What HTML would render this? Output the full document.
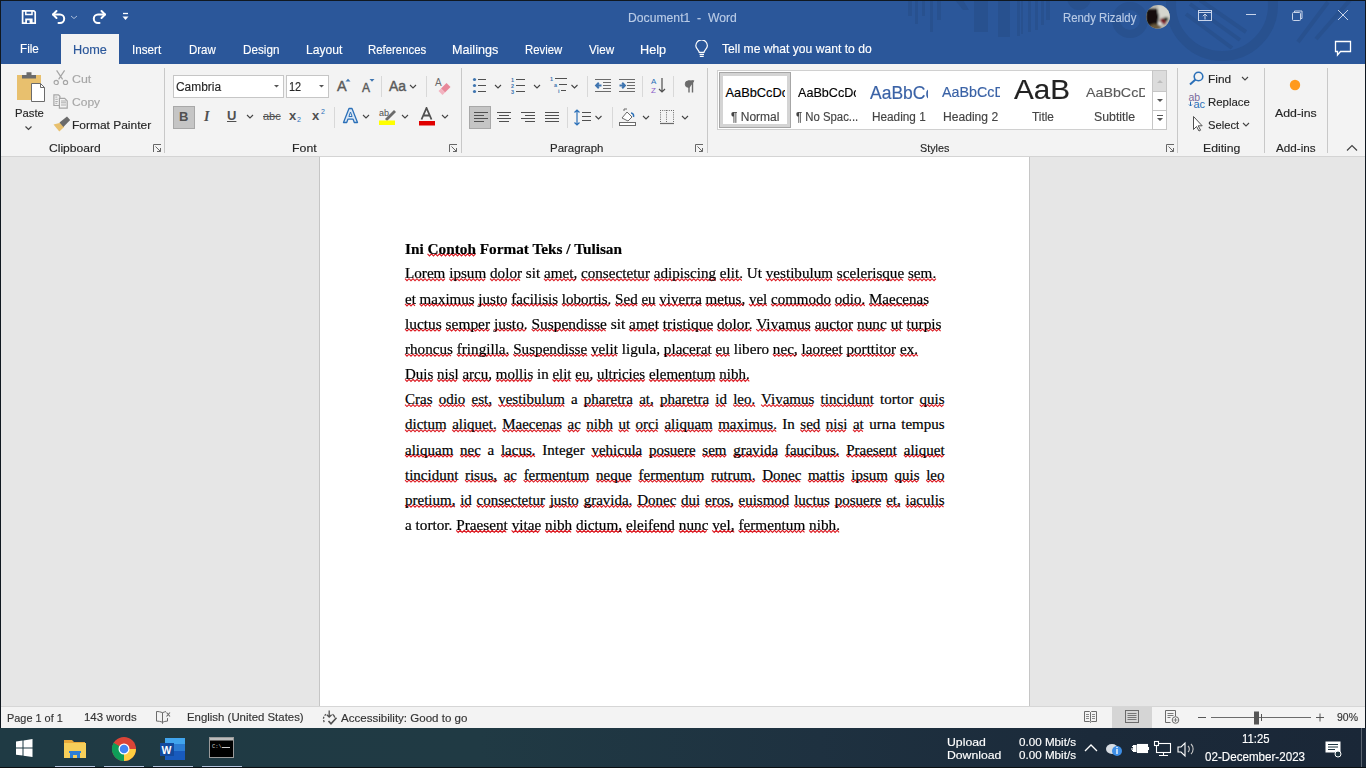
<!DOCTYPE html>
<html><head><meta charset="utf-8">
<style>
*{margin:0;padding:0;box-sizing:border-box}
html,body{width:1366px;height:768px;overflow:hidden;background:#e6e6e6;font-family:"Liberation Sans",sans-serif;position:relative}
.a{position:absolute;white-space:nowrap}
#title{left:0;top:0;width:1366px;height:64px;background:#2b579a;overflow:hidden}
#ribbon{left:0;top:64px;width:1366px;height:93px;background:#f3f3f3;border-bottom:1px solid #d4d4d4}
#page{left:319px;top:157px;width:711px;height:550px;background:#fff;border-left:1px solid #c6c6c6;border-right:1px solid #c6c6c6}
#status{left:0;top:707px;width:1366px;height:21px;background:#f3f3f3}
#task{left:0;top:728px;width:1366px;height:40px;background:linear-gradient(90deg,#1f3a44 0%,#203a44 35%,#1e3140 60%,#1b2a3a 80%,#1a2737 100%)}
.tab{position:absolute;top:41px;font-size:13px;color:#fff;white-space:nowrap}
.rl{position:absolute;font-size:12px;color:#262626;white-space:nowrap}
.gl{position:absolute;top:141px;font-size:12px;color:#262626;white-space:nowrap}
.sep{position:absolute;top:68px;width:1px;height:85px;background:#c8c8c8}
.sl{position:absolute;top:710px;font-size:12px;color:#333;white-space:nowrap}
.tl{position:absolute;font-size:12px;color:#fff;white-space:nowrap}
.lb{-webkit-text-stroke-width:0.15px}
.dt{position:absolute;left:405px;font-family:"Liberation Serif",serif;font-size:15px;color:#000;white-space:nowrap;transform-origin:0 0;-webkit-text-stroke:0.2px #000}
.dt u{text-decoration:none}
</style></head><body>
<!-- TITLE BAR -->
<div id="title" class="a">
<svg class="a" style="left:0;top:0" width="1366" height="64">
 <g fill="#28518f"><rect x="908" y="0" width="4" height="16"/><rect x="915" y="0" width="3" height="24"/><rect x="922" y="0" width="3" height="16"/><rect x="930" y="0" width="3" height="32"/><rect x="937" y="0" width="4" height="20"/><rect x="974" y="0" width="14" height="32"/><rect x="998" y="0" width="12" height="37"/><rect x="1017" y="0" width="3" height="36"/><rect x="1021" y="0" width="2" height="34"/><rect x="1028" y="0" width="3" height="32"/><rect x="1035" y="0" width="3" height="30"/><rect x="1041" y="0" width="3" height="25"/><rect x="1046" y="0" width="4" height="20"/><path d="M955 0h8l6 10h-6z"/></g>
 <circle cx="1079" cy="-2" r="12" fill="#28518f"/>
 <circle cx="1130" cy="20" r="14" fill="none" stroke="#28518f" stroke-width="8"/>
 <circle cx="1222" cy="5" r="51" fill="none" stroke="#28518f" stroke-width="10"/>
 <g stroke="#28518f" stroke-width="4">
  <line x1="1186" y1="14" x2="1232" y2="48"/><line x1="1190" y1="4" x2="1240" y2="40"/><line x1="1200" y1="0" x2="1246" y2="32"/>
  <line x1="1298" y1="42" x2="1328" y2="2"/><line x1="1316" y1="39" x2="1350" y2="0"/>
 </g>
</svg>
<!-- QAT -->
<svg class="a" style="left:20px;top:8px" width="112" height="18">
 <path d="M2.6 2.8h11.2l1.4 1.4V15.2H2.6z" fill="none" stroke="#fff" stroke-width="1.7"/>
 <path d="M5.8 3v3.6h6.2V3" fill="none" stroke="#fff" stroke-width="1.5"/>
 <rect x="5.2" y="10.5" width="7.4" height="4.5" fill="#fff"/>
 <rect x="7" y="12.3" width="2.6" height="2.8" fill="#2b579a"/>
 <g fill="none" stroke="#fff" stroke-width="2" stroke-linecap="round" stroke-linejoin="round">
  <path d="M33 6.5h7a4.2 4.2 0 0 1 0 8.4h-1.5"/><path d="M36.5 3l-3.5 3.5 3.5 3.5"/>
  <path d="M85 6.5h-7a4.2 4.2 0 0 0 0 8.4h1.5"/><path d="M81.5 3l3.5 3.5-3.5 3.5"/>
 </g>
 <path d="M51 8l3 2.5 3-2.5" fill="none" stroke="#a9bcd9" stroke-width="1"/>
 <path d="M103 5.5h5" stroke="#fff" stroke-width="1.3"/>
 <path d="M102.5 8.5h6l-3 3.5z" fill="#fff"/>
</svg>
<svg class="a" style="left:1146px;top:5px" width="25" height="25">
 <defs><clipPath id="av"><circle cx="12" cy="11.8" r="11.8"/></clipPath><filter id="bl"><feGaussianBlur stdDeviation="0.8"/></filter></defs>
 <g clip-path="url(#av)">
  <rect width="25" height="25" fill="#b8b8b0"/>
  <g filter="url(#bl)">
   <rect x="12" y="0" width="14" height="16" fill="#d6d6ce"/>
   <path d="M0 4h12v20H0z" fill="#1e1a18"/>
   <ellipse cx="7" cy="12" rx="6" ry="8" fill="#121010"/>
   <ellipse cx="9" cy="22" rx="6" ry="3" fill="#6a5a3c"/>
   <ellipse cx="17" cy="16" rx="3" ry="3" fill="#7a1822"/>
   <ellipse cx="20" cy="14" rx="2.5" ry="2" fill="#1c2a1c"/>
   <ellipse cx="14" cy="18.5" rx="2" ry="1.5" fill="#f2f2f2"/>
  </g>
 </g>
</svg>
<svg class="a" style="left:1196px;top:8px" width="160" height="16">
 <g fill="none" stroke="#c8d4ea" stroke-width="1">
  <rect x="2.5" y="2.5" width="13" height="10"/><path d="M2.5 4.5h13"/><path d="M9 11.5v-5.5M6.8 8.2l2.2-2.2 2.2 2.2"/>
  <path d="M50 6.5h10"/>
  <rect x="96.5" y="4.5" width="8" height="8" rx="1"/><path d="M98.5 4.5v-1.5h7.5v7.5h-1.5"/>
  <path d="M142 2l10 10M152 2l-10 10"/>
 </g>
</svg>
<!-- TABS -->
<div class="a" style="left:61px;top:34px;width:58px;height:30px;background:#f3f3f3"></div>
<svg class="a" style="left:694px;top:40px" width="16" height="18">
 <g fill="none" stroke="#fff" stroke-width="1.2">
  <path d="M5.2 12.3c0-2.2-3.4-3.6-3.4-6.6a5.8 5.8 0 0 1 11.6 0c0 3-3.4 4.4-3.4 6.6z"/>
  <path d="M5.5 14.3h4.5M5.8 16.3h3.9"/>
 </g>
</svg>
<svg class="a" style="left:1333px;top:40px" width="20" height="18">
 <path d="M2.5 1.5h15v10h-10l-3 3.5v-3.5h-2z" fill="none" stroke="#fff" stroke-width="1.3"/>
</svg>
</div>
<!-- RIBBON -->
<div id="ribbon" class="a"></div>
<div class="sep" style="left:164px"></div>
<div class="sep" style="left:461px"></div>
<div class="sep" style="left:707px"></div>
<div class="sep" style="left:1177px"></div>
<div class="sep" style="left:1264px"></div>
<div class="sep" style="left:1327px"></div>
<!-- Clipboard -->
<svg class="a" style="left:15px;top:70px" width="34" height="34">
 <rect x="2" y="5" width="24" height="25" fill="#e8c06e"/>
 <path d="M7 5h4.5v-2.8h5v2.8h4.5v3.6h-14z" fill="#6b6b6b"/>
 <path d="M16.5 13.5h9l4 4v14h-13z" fill="#fff" stroke="#6b6b6b" stroke-width="1"/>
 <path d="M25.5 13.5v4h4" fill="none" stroke="#6b6b6b" stroke-width="1"/>
</svg>
<svg class="a" style="left:24px;top:125px" width="10" height="6"><path d="M1.5 1.5l3 3 3-3" fill="none" stroke="#444" stroke-width="1.2"/></svg>
<svg class="a" style="left:50px;top:66px" width="22" height="68">
 <g fill="none" stroke="#a6a6a6" stroke-width="1.2">
  <path d="M6.6 4.4l6 9M14.6 4.4l-6 9"/><circle cx="6.2" cy="16.4" r="2.1"/><circle cx="15.5" cy="16.4" r="2.1"/>
  <path d="M3.9 28.8h4.5l1.5 1.5v9.2h-6z"/><path d="M9.4 32.4h5.3l2.5 2.5v7.2h-7.8z" fill="#f3f3f3"/>
  <path d="M5.3 31.1h2M5.3 33.3h2.5M5.3 35.5h2.5M5.3 37.3h2" stroke-width="0.9"/>
  <path d="M11 35h5M11 36.8h5M11 39h5" stroke-width="0.9"/>
 </g>
 <path d="M10.6 56.7l-7.1 1.8 5.8 7 4.9-4.4z" fill="#e8c06e"/>
 <path d="M9.5 56.5l7.5-6 3.2 3.6-6.8 6.8z" fill="#6b6b6b"/>
</svg>
<!-- launchers -->
<svg class="a" style="left:153px;top:144px" width="9" height="9"><path d="M0.5 8V0.5H8M2.5 2.5l5 5M4 7.5h3.5V4" fill="none" stroke="#666" stroke-width="1"/></svg>
<svg class="a" style="left:449px;top:144px" width="9" height="9"><path d="M0.5 8V0.5H8M2.5 2.5l5 5M4 7.5h3.5V4" fill="none" stroke="#666" stroke-width="1"/></svg>
<svg class="a" style="left:695px;top:144px" width="9" height="9"><path d="M0.5 8V0.5H8M2.5 2.5l5 5M4 7.5h3.5V4" fill="none" stroke="#666" stroke-width="1"/></svg>
<svg class="a" style="left:1166px;top:144px" width="9" height="9"><path d="M0.5 8V0.5H8M2.5 2.5l5 5M4 7.5h3.5V4" fill="none" stroke="#666" stroke-width="1"/></svg>
<!-- Font -->
<div class="a" style="left:173px;top:75px;width:111px;height:23px;background:#fff;border:1px solid #c6c6c6"></div>
<svg class="a" style="left:274px;top:85px" width="6" height="4"><path d="M0 0h5l-2.5 2.6z" fill="#555"/></svg>
<div class="a" style="left:286px;top:75px;width:43px;height:23px;background:#fff;border:1px solid #c6c6c6"></div>
<svg class="a" style="left:319px;top:85px" width="6" height="4"><path d="M0 0h5l-2.5 2.6z" fill="#555"/></svg>
<div class="rl" style="left:337px;top:78px;font-size:14.5px;-webkit-text-stroke:0.4px #5a5a5a;color:#5a5a5a">A</div>
<svg class="a" style="left:345px;top:78px" width="7" height="5"><path d="M0.5 3.5l2.5-2.8 2.5 2.8z" fill="#3f75b0"/></svg>
<div class="rl" style="left:362px;top:81px;font-size:12px;-webkit-text-stroke:0.4px #5a5a5a;color:#5a5a5a">A</div>
<svg class="a" style="left:369px;top:79px" width="7" height="5"><path d="M0.5 0h5l-2.5 2.8z" fill="#3f75b0"/></svg>
<div class="a" style="left:381px;top:76px;width:1px;height:21px;background:#d8d8d8"></div>
<div class="rl" style="left:389px;top:78px;font-size:14px;-webkit-text-stroke:0.4px #5a5a5a;color:#5a5a5a">Aa</div>
<svg class="a" style="left:409px;top:84px" width="8" height="5"><path d="M1 1l3 3 3-3" fill="none" stroke="#444" stroke-width="1.1"/></svg>
<div class="a" style="left:426px;top:76px;width:1px;height:21px;background:#d8d8d8"></div>
<svg class="a" style="left:434px;top:77px" width="18" height="18">
 <text x="1" y="9" font-family="Liberation Sans" font-size="10" fill="#6b6b6b">A</text>
 <path d="M7 11.5l5.5-5.5 4 4-5.5 5.5z" fill="#e8889a"/>
 <path d="M4.5 14l2.5-2.5 4 4-2.5 2.5z" fill="#f2b3c0"/>
</svg>
<!-- row2 -->
<div class="a" style="left:173px;top:106px;width:22px;height:23px;background:#c5c5c5;border:1px solid #a8a8a8"></div>
<div class="rl" style="left:179px;top:109px;font-size:13px;font-weight:bold;color:#505050">B</div>
<div class="rl" style="left:204px;top:109px;font-size:14px;font-style:italic;font-weight:bold;font-family:'Liberation Serif',serif;color:#505050">I</div>
<div class="rl" style="left:227px;top:108px;font-size:13px;font-weight:bold;color:#505050;text-decoration:underline">U</div>
<svg class="a" style="left:246px;top:114px" width="8" height="5"><path d="M1 1l3 3 3-3" fill="none" stroke="#444" stroke-width="1.1"/></svg>
<div class="rl" style="left:263px;top:110px;font-size:11px;color:#505050;text-decoration:line-through">abc</div>
<div class="rl" style="left:289px;top:108px;font-size:13px;font-weight:bold;color:#505050">x</div>
<div class="rl" style="left:297px;top:116px;font-size:7px;color:#2b70b8">2</div>
<div class="rl" style="left:312px;top:108px;font-size:13px;font-weight:bold;color:#505050">x</div>
<div class="rl" style="left:321px;top:108px;font-size:7px;color:#2b70b8">2</div>
<div class="a" style="left:334px;top:107px;width:1px;height:21px;background:#d8d8d8"></div>
<svg class="a" style="left:342px;top:107px" width="17" height="17">
 <path d="M1.5 15.5L7 1.5h3l5.5 14h-3.2l-1.2-3.3H5.9l-1.2 3.3z" fill="#dbe7f5" stroke="#2b70b8" stroke-width="1.3" stroke-linejoin="round"/>
 <path d="M6.9 9.5h3.2L8.5 5z" fill="#f3f3f3" stroke="#2b70b8" stroke-width="1"/>
</svg>
<svg class="a" style="left:362px;top:114px" width="8" height="5"><path d="M1 1l3 3 3-3" fill="none" stroke="#444" stroke-width="1.1"/></svg>
<svg class="a" style="left:378px;top:107px" width="20" height="20">
 <text x="1" y="9" font-family="Liberation Sans" font-size="9" fill="#505050">ab</text>
 <path d="M7 12l9-9 2 2-9 9z" fill="#6b6b6b"/>
 <rect x="1" y="13.5" width="16" height="4.5" fill="#ffff00"/>
</svg>
<svg class="a" style="left:401px;top:114px" width="8" height="5"><path d="M1 1l3 3 3-3" fill="none" stroke="#444" stroke-width="1.1"/></svg>
<svg class="a" style="left:418px;top:107px" width="18" height="20">
 <path d="M3.5 12.5L8.5 1 13.5 12.5M5.5 8.5h6" fill="none" stroke="#505050" stroke-width="1.8"/>
 <rect x="1" y="14" width="16" height="4.5" fill="#e00000"/>
</svg>
<svg class="a" style="left:441px;top:114px" width="8" height="5"><path d="M1 1l3 3 3-3" fill="none" stroke="#444" stroke-width="1.1"/></svg>
<!-- Paragraph -->
<svg class="a" style="left:470px;top:76px" width="232" height="20">
 <g fill="#3f75b0">
  <circle cx="4.5" cy="3.5" r="1.6"/><circle cx="4.5" cy="9.5" r="1.6"/><circle cx="4.5" cy="15.5" r="1.6"/>
 </g>
 <g stroke="#505050" stroke-width="1.2">
  <path d="M8 3.5h8M8 9.5h8M8 15.5h8"/>
  <path d="M46 3.5h9M46 9.5h9M46 15.5h9"/>
  <path d="M85 2.5h12M89 8.5h8M91 14.5h5"/>
 </g>
 <g font-family="Liberation Sans" font-size="5.5" fill="#3f75b0" font-weight="bold">
  <text x="41" y="5.5">1</text><text x="41" y="11.5">2</text><text x="41" y="17.5">3</text>
  <text x="80" y="5">1</text><text x="84" y="11">a</text><text x="88" y="17">i</text>
 </g>
 <g fill="none" stroke="#444" stroke-width="1.1">
  <path d="M25 9l3 3 3-3"/><path d="M64 9l3 3 3-3"/><path d="M101.5 9l3 3 3-3"/>
 </g>
 <g stroke="#6b6b6b" stroke-width="1.1">
  <path d="M125 3.5h16M133 6.5h8M133 9.5h8M133 12.5h8M125 15.5h16"/>
  <path d="M149 3.5h16M157 6.5h8M157 9.5h8M157 12.5h8M149 15.5h16"/>
 </g>
 <path d="M131.5 9.5h-5M128.8 6.8l-2.7 2.7 2.7 2.7" fill="none" stroke="#3f75b0" stroke-width="2"/>
 <path d="M149.5 9.5h5M152.2 6.8l2.7 2.7-2.7 2.7" fill="none" stroke="#3f75b0" stroke-width="2"/>
 <text x="181" y="8" font-family="Liberation Sans" font-size="8" fill="#2b70b8">A</text>
 <text x="181" y="17" font-family="Liberation Sans" font-size="8" fill="#8a5cc8">Z</text>
 <path d="M192 2v14M189 13l3 3 3-3" fill="none" stroke="#505050" stroke-width="1.2"/>
 <path d="M219 4.5v12M222.5 4.5v12" stroke="#6b6b6b" stroke-width="1.4"/><path d="M224 4.8h-5.5a3.3 3.3 0 0 0 0 6.6h0.8z" fill="#6b6b6b" stroke="#6b6b6b" stroke-width="0.8"/>
</svg>
<div class="a" style="left:587px;top:76px;width:1px;height:21px;background:#d8d8d8"></div>
<div class="a" style="left:642px;top:76px;width:1px;height:21px;background:#d8d8d8"></div>
<div class="a" style="left:673px;top:76px;width:1px;height:21px;background:#d8d8d8"></div>
<div class="a" style="left:469px;top:106px;width:22px;height:23px;background:#c5c5c5;border:1px solid #a8a8a8"></div>
<svg class="a" style="left:470px;top:108px" width="220" height="20">
 <g stroke="#505050" stroke-width="1.2">
  <path d="M4 4.5h14M4 7.5h10M4 10.5h14M4 13.5h10"/>
  <path d="M27 4.5h14M29 7.5h10M27 10.5h14M29 13.5h10"/>
  <path d="M51 4.5h14M55 7.5h10M51 10.5h14M55 13.5h10"/>
  <path d="M75 4.5h14M75 7.5h14M75 10.5h14M75 13.5h14"/>
  <path d="M112 4.5h9M112 8.5h9M112 12.5h9"/>
 </g>
 <path d="M107 2v15M104.5 4.5l2.5-2.5 2.5 2.5M104.5 14.5l2.5 2.5 2.5-2.5" fill="none" stroke="#2b70b8" stroke-width="1.2"/>
 <g fill="none" stroke="#444" stroke-width="1.1">
  <path d="M125.5 8l3 3 3-3"/><path d="M173 8l3 3 3-3"/><path d="M212 8l3 3 3-3"/>
 </g>
 <path d="M152 10l5-6 5 5-4 4z" fill="#fff" stroke="#6b6b6b" stroke-width="1"/>
 <path d="M154 3v-2h3" fill="none" stroke="#6b6b6b" stroke-width="1"/>
 <path d="M161 5c2 0 3 2 2.5 4" fill="none" stroke="#2b70b8" stroke-width="1.5"/>
 <rect x="149.5" y="14.5" width="16" height="3" fill="#fff" stroke="#6b6b6b" stroke-width="1"/>
 <g fill="none" stroke="#6b6b6b" stroke-width="1" stroke-dasharray="1 1.2">
  <path d="M190 2.5h14M190.5 2v12M196.5 2v12M203.5 2v12"/>
 </g>
 <path d="M190 15.5h14" stroke="#6b6b6b" stroke-width="1.2"/>
</svg>
<div class="a" style="left:567px;top:107px;width:1px;height:21px;background:#d8d8d8"></div>
<div class="a" style="left:612px;top:107px;width:1px;height:21px;background:#d8d8d8"></div>
<!-- Styles -->
<div class="a" style="left:717px;top:70px;width:450px;height:60px;background:#fff;border:1px solid #d0d0d0"></div>
<div class="a" style="left:1152px;top:70px;width:15px;height:60px;border:1px solid #c6c6c6;background:#fff"></div>
<div class="a" style="left:1153px;top:71px;width:13px;height:20px;background:#dcdcdc"></div>
<div class="a" style="left:1152px;top:91px;width:15px;height:1px;background:#c6c6c6"></div>
<div class="a" style="left:1152px;top:110px;width:15px;height:1px;background:#c6c6c6"></div>
<svg class="a" style="left:1153px;top:71px" width="14" height="58">
 <path d="M4 12l3-3 3 3z" fill="#bdbdbd"/>
 <path d="M4 28h6l-3 3z" fill="#555"/>
 <path d="M4 44h6M4 47h6l-3 3z" fill="#555" stroke="#555" stroke-width="0"/>
 <rect x="4" y="44" width="6" height="1" fill="#555"/>
</svg>
<div class="a" style="left:719px;top:72px;width:72px;height:56px;border:1px solid #a6a6a6;box-shadow:inset 0 0 0 3px #d4d4d4;background:#fff"></div>
<!-- Editing -->
<svg class="a" style="left:1188px;top:71px" width="18" height="62">
 <circle cx="10.5" cy="5.5" r="4.3" fill="none" stroke="#2b70b8" stroke-width="1.6"/>
 <path d="M7.5 8.5l-5.5 5" stroke="#2b70b8" stroke-width="2"/>
 <text x="0.5" y="29.5" font-family="Liberation Sans" font-size="10.5" fill="#7a6a9c" transform="scale(1,1)">ab</text>
 <text x="5.5" y="37" font-family="Liberation Sans" font-size="11" fill="#2b70b8">ac</text>
 <path d="M2.5 30.5v4.5M1 33.5l1.5 1.5 1.5-1.5" fill="none" stroke="#2b70b8" stroke-width="1"/>
 <path d="M5.5 45.5v13l3-3 2.5 4.5 1.6-0.8-2.4-4.4h4z" fill="#fff" stroke="#505050" stroke-width="1"/>
</svg>
<svg class="a" style="left:1241px;top:76px" width="8" height="5"><path d="M1 1l3 3 3-3" fill="none" stroke="#444" stroke-width="1.1"/></svg>
<svg class="a" style="left:1242px;top:122px" width="8" height="5"><path d="M1 1l3 3 3-3" fill="none" stroke="#444" stroke-width="1.1"/></svg>
<!-- Add-ins -->
<svg class="a" style="left:1288px;top:78px" width="14" height="14"><circle cx="7" cy="7" r="5.2" fill="#ff9a1e"/></svg>
<svg class="a" style="left:1346px;top:144px" width="12" height="8"><path d="M1 6.5l5-5 5 5" fill="none" stroke="#444" stroke-width="1.2"/></svg>

<div id="page" class="a"></div>
<svg class="a" style="left:0;top:0" width="1366" height="768"><path fill="none" stroke="#dc1a22" stroke-width="1.1" d="M427.5 253.90 l2 2 l2 -2 l2 2 l2 -2 l2 2 l2 -2 l2 2 l2 -2 l2 2 l2 -2 l2 2 l2 -2 l2 2 l2 -2 l2 2 l2 -2 l2 2 l2 -2 l2 2 l2 -2 l2 2 l2 -2 l2 2 l2 -2 M405.0 278.70 l2 2 l2 -2 l2 2 l2 -2 l2 2 l2 -2 l2 2 l2 -2 l2 2 l2 -2 l2 2 l2 -2 l2 2 l2 -2 l2 2 l2 -2 l2 2 l2 -2 l2 2 l2 -2 M449.2 278.70 l2 2 l2 -2 l2 2 l2 -2 l2 2 l2 -2 l2 2 l2 -2 l2 2 l2 -2 l2 2 l2 -2 l2 2 l2 -2 l2 2 l2 -2 l2 2 l2 -2 M490.0 278.70 l2 2 l2 -2 l2 2 l2 -2 l2 2 l2 -2 l2 2 l2 -2 l2 2 l2 -2 l2 2 l2 -2 l2 2 l2 -2 l2 2 M543.9 278.70 l2 2 l2 -2 l2 2 l2 -2 l2 2 l2 -2 l2 2 l2 -2 l2 2 l2 -2 l2 2 l2 -2 l2 2 l2 -2 l2 2 l2 -2 M581.0 278.70 l2 2 l2 -2 l2 2 l2 -2 l2 2 l2 -2 l2 2 l2 -2 l2 2 l2 -2 l2 2 l2 -2 l2 2 l2 -2 l2 2 l2 -2 l2 2 l2 -2 l2 2 l2 -2 l2 2 l2 -2 l2 2 l2 -2 l2 2 l2 -2 l2 2 l2 -2 l2 2 l2 -2 l2 2 l2 -2 l2 2 l2 -2 M653.8 278.70 l2 2 l2 -2 l2 2 l2 -2 l2 2 l2 -2 l2 2 l2 -2 l2 2 l2 -2 l2 2 l2 -2 l2 2 l2 -2 l2 2 l2 -2 l2 2 l2 -2 l2 2 l2 -2 l2 2 l2 -2 l2 2 l2 -2 l2 2 l2 -2 l2 2 l2 -2 l2 2 l2 -2 l2 2 M719.8 278.70 l2 2 l2 -2 l2 2 l2 -2 l2 2 l2 -2 l2 2 l2 -2 l2 2 l2 -2 l2 2 M765.7 278.70 l2 2 l2 -2 l2 2 l2 -2 l2 2 l2 -2 l2 2 l2 -2 l2 2 l2 -2 l2 2 l2 -2 l2 2 l2 -2 l2 2 l2 -2 l2 2 l2 -2 l2 2 l2 -2 l2 2 l2 -2 l2 2 l2 -2 l2 2 l2 -2 l2 2 l2 -2 l2 2 l2 -2 l2 2 l2 -2 l2 2 M836.9 278.70 l2 2 l2 -2 l2 2 l2 -2 l2 2 l2 -2 l2 2 l2 -2 l2 2 l2 -2 l2 2 l2 -2 l2 2 l2 -2 l2 2 l2 -2 l2 2 l2 -2 l2 2 l2 -2 l2 2 l2 -2 l2 2 l2 -2 l2 2 l2 -2 l2 2 l2 -2 l2 2 l2 -2 l2 2 l2 -2 l2 2 M908.0 278.70 l2 2 l2 -2 l2 2 l2 -2 l2 2 l2 -2 l2 2 l2 -2 l2 2 l2 -2 l2 2 l2 -2 l2 2 l2 -2 M405.0 303.87 l2 2 l2 -2 l2 2 l2 -2 l2 2 M419.6 303.87 l2 2 l2 -2 l2 2 l2 -2 l2 2 l2 -2 l2 2 l2 -2 l2 2 l2 -2 l2 2 l2 -2 l2 2 l2 -2 l2 2 l2 -2 l2 2 l2 -2 l2 2 l2 -2 l2 2 l2 -2 l2 2 l2 -2 l2 2 l2 -2 l2 2 M478.4 303.87 l2 2 l2 -2 l2 2 l2 -2 l2 2 l2 -2 l2 2 l2 -2 l2 2 l2 -2 l2 2 l2 -2 l2 2 l2 -2 M511.3 303.87 l2 2 l2 -2 l2 2 l2 -2 l2 2 l2 -2 l2 2 l2 -2 l2 2 l2 -2 l2 2 l2 -2 l2 2 l2 -2 l2 2 l2 -2 l2 2 l2 -2 l2 2 l2 -2 l2 2 l2 -2 l2 2 M561.8 303.87 l2 2 l2 -2 l2 2 l2 -2 l2 2 l2 -2 l2 2 l2 -2 l2 2 l2 -2 l2 2 l2 -2 l2 2 l2 -2 l2 2 l2 -2 l2 2 l2 -2 l2 2 l2 -2 l2 2 l2 -2 l2 2 l2 -2 M615.1 303.87 l2 2 l2 -2 l2 2 l2 -2 l2 2 l2 -2 l2 2 l2 -2 l2 2 l2 -2 l2 2 M641.4 303.87 l2 2 l2 -2 l2 2 l2 -2 l2 2 l2 -2 l2 2 M659.3 303.87 l2 2 l2 -2 l2 2 l2 -2 l2 2 l2 -2 l2 2 l2 -2 l2 2 l2 -2 l2 2 l2 -2 l2 2 l2 -2 l2 2 l2 -2 l2 2 l2 -2 l2 2 l2 -2 l2 2 M705.6 303.87 l2 2 l2 -2 l2 2 l2 -2 l2 2 l2 -2 l2 2 l2 -2 l2 2 l2 -2 l2 2 l2 -2 l2 2 l2 -2 l2 2 l2 -2 l2 2 l2 -2 l2 2 M748.9 303.87 l2 2 l2 -2 l2 2 l2 -2 l2 2 l2 -2 l2 2 l2 -2 l2 2 M771.0 303.87 l2 2 l2 -2 l2 2 l2 -2 l2 2 l2 -2 l2 2 l2 -2 l2 2 l2 -2 l2 2 l2 -2 l2 2 l2 -2 l2 2 l2 -2 l2 2 l2 -2 l2 2 l2 -2 l2 2 l2 -2 l2 2 l2 -2 l2 2 l2 -2 l2 2 l2 -2 l2 2 l2 -2 M834.8 303.87 l2 2 l2 -2 l2 2 l2 -2 l2 2 l2 -2 l2 2 l2 -2 l2 2 l2 -2 l2 2 l2 -2 l2 2 l2 -2 l2 2 M869.0 303.87 l2 2 l2 -2 l2 2 l2 -2 l2 2 l2 -2 l2 2 l2 -2 l2 2 l2 -2 l2 2 l2 -2 l2 2 l2 -2 l2 2 l2 -2 l2 2 l2 -2 l2 2 l2 -2 l2 2 l2 -2 l2 2 l2 -2 l2 2 l2 -2 l2 2 l2 -2 l2 2 M405.0 329.04 l2 2 l2 -2 l2 2 l2 -2 l2 2 l2 -2 l2 2 l2 -2 l2 2 l2 -2 l2 2 l2 -2 l2 2 l2 -2 l2 2 l2 -2 l2 2 l2 -2 M445.6 329.04 l2 2 l2 -2 l2 2 l2 -2 l2 2 l2 -2 l2 2 l2 -2 l2 2 l2 -2 l2 2 l2 -2 l2 2 l2 -2 l2 2 l2 -2 l2 2 l2 -2 l2 2 l2 -2 l2 2 l2 -2 M493.9 329.04 l2 2 l2 -2 l2 2 l2 -2 l2 2 l2 -2 l2 2 l2 -2 l2 2 l2 -2 l2 2 l2 -2 l2 2 l2 -2 l2 2 l2 -2 M531.6 329.04 l2 2 l2 -2 l2 2 l2 -2 l2 2 l2 -2 l2 2 l2 -2 l2 2 l2 -2 l2 2 l2 -2 l2 2 l2 -2 l2 2 l2 -2 l2 2 l2 -2 l2 2 l2 -2 l2 2 l2 -2 l2 2 l2 -2 l2 2 l2 -2 l2 2 l2 -2 l2 2 l2 -2 l2 2 l2 -2 l2 2 l2 -2 l2 2 l2 -2 l2 2 M629.0 329.04 l2 2 l2 -2 l2 2 l2 -2 l2 2 l2 -2 l2 2 l2 -2 l2 2 l2 -2 l2 2 l2 -2 l2 2 l2 -2 M662.8 329.04 l2 2 l2 -2 l2 2 l2 -2 l2 2 l2 -2 l2 2 l2 -2 l2 2 l2 -2 l2 2 l2 -2 l2 2 l2 -2 l2 2 l2 -2 l2 2 l2 -2 l2 2 l2 -2 l2 2 l2 -2 l2 2 l2 -2 l2 2 M717.1 329.04 l2 2 l2 -2 l2 2 l2 -2 l2 2 l2 -2 l2 2 l2 -2 l2 2 l2 -2 l2 2 l2 -2 l2 2 l2 -2 l2 2 l2 -2 l2 2 M756.2 329.04 l2 2 l2 -2 l2 2 l2 -2 l2 2 l2 -2 l2 2 l2 -2 l2 2 l2 -2 l2 2 l2 -2 l2 2 l2 -2 l2 2 l2 -2 l2 2 l2 -2 l2 2 l2 -2 l2 2 l2 -2 l2 2 l2 -2 l2 2 l2 -2 l2 2 M814.7 329.04 l2 2 l2 -2 l2 2 l2 -2 l2 2 l2 -2 l2 2 l2 -2 l2 2 l2 -2 l2 2 l2 -2 l2 2 l2 -2 l2 2 l2 -2 l2 2 l2 -2 l2 2 M857.0 329.04 l2 2 l2 -2 l2 2 l2 -2 l2 2 l2 -2 l2 2 l2 -2 l2 2 l2 -2 l2 2 l2 -2 l2 2 l2 -2 M890.7 329.04 l2 2 l2 -2 l2 2 l2 -2 l2 2 M906.6 329.04 l2 2 l2 -2 l2 2 l2 -2 l2 2 l2 -2 l2 2 l2 -2 l2 2 l2 -2 l2 2 l2 -2 l2 2 l2 -2 l2 2 l2 -2 l2 2 M405.0 354.21 l2 2 l2 -2 l2 2 l2 -2 l2 2 l2 -2 l2 2 l2 -2 l2 2 l2 -2 l2 2 l2 -2 l2 2 l2 -2 l2 2 l2 -2 l2 2 l2 -2 l2 2 l2 -2 l2 2 l2 -2 l2 2 M456.8 354.21 l2 2 l2 -2 l2 2 l2 -2 l2 2 l2 -2 l2 2 l2 -2 l2 2 l2 -2 l2 2 l2 -2 l2 2 l2 -2 l2 2 l2 -2 l2 2 l2 -2 l2 2 l2 -2 l2 2 l2 -2 l2 2 l2 -2 l2 2 l2 -2 M513.2 354.21 l2 2 l2 -2 l2 2 l2 -2 l2 2 l2 -2 l2 2 l2 -2 l2 2 l2 -2 l2 2 l2 -2 l2 2 l2 -2 l2 2 l2 -2 l2 2 l2 -2 l2 2 l2 -2 l2 2 l2 -2 l2 2 l2 -2 l2 2 l2 -2 l2 2 l2 -2 l2 2 l2 -2 l2 2 l2 -2 l2 2 l2 -2 l2 2 l2 -2 l2 2 M591.0 354.21 l2 2 l2 -2 l2 2 l2 -2 l2 2 l2 -2 l2 2 l2 -2 l2 2 l2 -2 l2 2 l2 -2 l2 2 M663.9 354.21 l2 2 l2 -2 l2 2 l2 -2 l2 2 l2 -2 l2 2 l2 -2 l2 2 l2 -2 l2 2 l2 -2 l2 2 l2 -2 l2 2 l2 -2 l2 2 l2 -2 l2 2 l2 -2 l2 2 l2 -2 l2 2 M715.6 354.21 l2 2 l2 -2 l2 2 l2 -2 l2 2 l2 -2 l2 2 M772.8 354.21 l2 2 l2 -2 l2 2 l2 -2 l2 2 l2 -2 l2 2 l2 -2 l2 2 l2 -2 l2 2 l2 -2 M801.4 354.21 l2 2 l2 -2 l2 2 l2 -2 l2 2 l2 -2 l2 2 l2 -2 l2 2 l2 -2 l2 2 l2 -2 l2 2 l2 -2 l2 2 l2 -2 l2 2 l2 -2 l2 2 l2 -2 M846.5 354.21 l2 2 l2 -2 l2 2 l2 -2 l2 2 l2 -2 l2 2 l2 -2 l2 2 l2 -2 l2 2 l2 -2 l2 2 l2 -2 l2 2 l2 -2 l2 2 l2 -2 l2 2 l2 -2 l2 2 l2 -2 l2 2 l2 -2 M899.9 354.21 l2 2 l2 -2 l2 2 l2 -2 l2 2 l2 -2 l2 2 l2 -2 l2 2 M405.0 379.38 l2 2 l2 -2 l2 2 l2 -2 l2 2 l2 -2 l2 2 l2 -2 l2 2 l2 -2 l2 2 l2 -2 l2 2 l2 -2 M437.1 379.38 l2 2 l2 -2 l2 2 l2 -2 l2 2 l2 -2 l2 2 l2 -2 l2 2 l2 -2 M462.5 379.38 l2 2 l2 -2 l2 2 l2 -2 l2 2 l2 -2 l2 2 l2 -2 l2 2 l2 -2 l2 2 l2 -2 l2 2 l2 -2 M495.8 379.38 l2 2 l2 -2 l2 2 l2 -2 l2 2 l2 -2 l2 2 l2 -2 l2 2 l2 -2 l2 2 l2 -2 l2 2 l2 -2 l2 2 l2 -2 l2 2 l2 -2 M552.4 379.38 l2 2 l2 -2 l2 2 l2 -2 l2 2 l2 -2 l2 2 l2 -2 l2 2 M575.3 379.38 l2 2 l2 -2 l2 2 l2 -2 l2 2 l2 -2 l2 2 l2 -2 M596.9 379.38 l2 2 l2 -2 l2 2 l2 -2 l2 2 l2 -2 l2 2 l2 -2 l2 2 l2 -2 l2 2 l2 -2 l2 2 l2 -2 l2 2 l2 -2 l2 2 l2 -2 l2 2 l2 -2 l2 2 l2 -2 l2 2 l2 -2 M649.0 379.38 l2 2 l2 -2 l2 2 l2 -2 l2 2 l2 -2 l2 2 l2 -2 l2 2 l2 -2 l2 2 l2 -2 l2 2 l2 -2 l2 2 l2 -2 l2 2 l2 -2 l2 2 l2 -2 l2 2 l2 -2 l2 2 l2 -2 l2 2 l2 -2 l2 2 l2 -2 l2 2 l2 -2 l2 2 l2 -2 l2 2 M719.3 379.38 l2 2 l2 -2 l2 2 l2 -2 l2 2 l2 -2 l2 2 l2 -2 l2 2 l2 -2 l2 2 l2 -2 l2 2 l2 -2 l2 2 M405.0 404.55 l2 2 l2 -2 l2 2 l2 -2 l2 2 l2 -2 l2 2 l2 -2 l2 2 l2 -2 l2 2 l2 -2 l2 2 M438.7 404.55 l2 2 l2 -2 l2 2 l2 -2 l2 2 l2 -2 l2 2 l2 -2 l2 2 l2 -2 l2 2 l2 -2 l2 2 M471.5 404.55 l2 2 l2 -2 l2 2 l2 -2 l2 2 l2 -2 l2 2 l2 -2 l2 2 l2 -2 M498.2 404.55 l2 2 l2 -2 l2 2 l2 -2 l2 2 l2 -2 l2 2 l2 -2 l2 2 l2 -2 l2 2 l2 -2 l2 2 l2 -2 l2 2 l2 -2 l2 2 l2 -2 l2 2 l2 -2 l2 2 l2 -2 l2 2 l2 -2 l2 2 l2 -2 l2 2 l2 -2 l2 2 l2 -2 l2 2 l2 -2 l2 2 M583.8 404.55 l2 2 l2 -2 l2 2 l2 -2 l2 2 l2 -2 l2 2 l2 -2 l2 2 l2 -2 l2 2 l2 -2 l2 2 l2 -2 l2 2 l2 -2 l2 2 l2 -2 l2 2 l2 -2 l2 2 l2 -2 l2 2 l2 -2 M639.2 404.55 l2 2 l2 -2 l2 2 l2 -2 l2 2 l2 -2 l2 2 M659.9 404.55 l2 2 l2 -2 l2 2 l2 -2 l2 2 l2 -2 l2 2 l2 -2 l2 2 l2 -2 l2 2 l2 -2 l2 2 l2 -2 l2 2 l2 -2 l2 2 l2 -2 l2 2 l2 -2 l2 2 l2 -2 l2 2 l2 -2 M715.3 404.55 l2 2 l2 -2 l2 2 l2 -2 l2 2 M733.1 404.55 l2 2 l2 -2 l2 2 l2 -2 l2 2 l2 -2 l2 2 l2 -2 l2 2 l2 -2 l2 2 M761.1 404.55 l2 2 l2 -2 l2 2 l2 -2 l2 2 l2 -2 l2 2 l2 -2 l2 2 l2 -2 l2 2 l2 -2 l2 2 l2 -2 l2 2 l2 -2 l2 2 l2 -2 l2 2 l2 -2 l2 2 l2 -2 l2 2 l2 -2 l2 2 l2 -2 M820.6 404.55 l2 2 l2 -2 l2 2 l2 -2 l2 2 l2 -2 l2 2 l2 -2 l2 2 l2 -2 l2 2 l2 -2 l2 2 l2 -2 l2 2 l2 -2 l2 2 l2 -2 l2 2 l2 -2 l2 2 l2 -2 l2 2 l2 -2 l2 2 l2 -2 M919.6 404.55 l2 2 l2 -2 l2 2 l2 -2 l2 2 l2 -2 l2 2 l2 -2 l2 2 l2 -2 l2 2 l2 -2 M405.0 429.72 l2 2 l2 -2 l2 2 l2 -2 l2 2 l2 -2 l2 2 l2 -2 l2 2 l2 -2 l2 2 l2 -2 l2 2 l2 -2 l2 2 l2 -2 l2 2 l2 -2 l2 2 l2 -2 M452.1 429.72 l2 2 l2 -2 l2 2 l2 -2 l2 2 l2 -2 l2 2 l2 -2 l2 2 l2 -2 l2 2 l2 -2 l2 2 l2 -2 l2 2 l2 -2 l2 2 l2 -2 l2 2 l2 -2 l2 2 l2 -2 M502.2 429.72 l2 2 l2 -2 l2 2 l2 -2 l2 2 l2 -2 l2 2 l2 -2 l2 2 l2 -2 l2 2 l2 -2 l2 2 l2 -2 l2 2 l2 -2 l2 2 l2 -2 l2 2 l2 -2 l2 2 l2 -2 l2 2 l2 -2 l2 2 l2 -2 l2 2 l2 -2 l2 2 M567.6 429.72 l2 2 l2 -2 l2 2 l2 -2 l2 2 l2 -2 M586.4 429.72 l2 2 l2 -2 l2 2 l2 -2 l2 2 l2 -2 l2 2 l2 -2 l2 2 l2 -2 l2 2 l2 -2 l2 2 M618.5 429.72 l2 2 l2 -2 l2 2 l2 -2 l2 2 M635.6 429.72 l2 2 l2 -2 l2 2 l2 -2 l2 2 l2 -2 l2 2 l2 -2 l2 2 l2 -2 l2 2 M664.4 429.72 l2 2 l2 -2 l2 2 l2 -2 l2 2 l2 -2 l2 2 l2 -2 l2 2 l2 -2 l2 2 l2 -2 l2 2 l2 -2 l2 2 l2 -2 l2 2 l2 -2 l2 2 l2 -2 l2 2 l2 -2 l2 2 l2 -2 M718.2 429.72 l2 2 l2 -2 l2 2 l2 -2 l2 2 l2 -2 l2 2 l2 -2 l2 2 l2 -2 l2 2 l2 -2 l2 2 l2 -2 l2 2 l2 -2 l2 2 l2 -2 l2 2 l2 -2 l2 2 l2 -2 l2 2 l2 -2 l2 2 l2 -2 l2 2 l2 -2 l2 2 M800.3 429.72 l2 2 l2 -2 l2 2 l2 -2 l2 2 l2 -2 l2 2 l2 -2 l2 2 l2 -2 M825.8 429.72 l2 2 l2 -2 l2 2 l2 -2 l2 2 l2 -2 l2 2 l2 -2 l2 2 l2 -2 M852.9 429.72 l2 2 l2 -2 l2 2 l2 -2 l2 2 M405.0 454.89 l2 2 l2 -2 l2 2 l2 -2 l2 2 l2 -2 l2 2 l2 -2 l2 2 l2 -2 l2 2 l2 -2 l2 2 l2 -2 l2 2 l2 -2 l2 2 l2 -2 l2 2 l2 -2 l2 2 l2 -2 l2 2 l2 -2 M460.0 454.89 l2 2 l2 -2 l2 2 l2 -2 l2 2 l2 -2 l2 2 l2 -2 l2 2 l2 -2 M501.0 454.89 l2 2 l2 -2 l2 2 l2 -2 l2 2 l2 -2 l2 2 l2 -2 l2 2 l2 -2 l2 2 l2 -2 l2 2 l2 -2 l2 2 l2 -2 l2 2 M591.4 454.89 l2 2 l2 -2 l2 2 l2 -2 l2 2 l2 -2 l2 2 l2 -2 l2 2 l2 -2 l2 2 l2 -2 l2 2 l2 -2 l2 2 l2 -2 l2 2 l2 -2 l2 2 l2 -2 l2 2 l2 -2 l2 2 l2 -2 l2 2 M649.0 454.89 l2 2 l2 -2 l2 2 l2 -2 l2 2 l2 -2 l2 2 l2 -2 l2 2 l2 -2 l2 2 l2 -2 l2 2 l2 -2 l2 2 l2 -2 l2 2 l2 -2 l2 2 l2 -2 l2 2 l2 -2 l2 2 M702.3 454.89 l2 2 l2 -2 l2 2 l2 -2 l2 2 l2 -2 l2 2 l2 -2 l2 2 l2 -2 l2 2 l2 -2 M733.2 454.89 l2 2 l2 -2 l2 2 l2 -2 l2 2 l2 -2 l2 2 l2 -2 l2 2 l2 -2 l2 2 l2 -2 l2 2 l2 -2 l2 2 l2 -2 l2 2 l2 -2 l2 2 l2 -2 l2 2 l2 -2 M784.9 454.89 l2 2 l2 -2 l2 2 l2 -2 l2 2 l2 -2 l2 2 l2 -2 l2 2 l2 -2 l2 2 l2 -2 l2 2 l2 -2 l2 2 l2 -2 l2 2 l2 -2 l2 2 l2 -2 l2 2 l2 -2 l2 2 l2 -2 l2 2 l2 -2 l2 2 M846.2 454.89 l2 2 l2 -2 l2 2 l2 -2 l2 2 l2 -2 l2 2 l2 -2 l2 2 l2 -2 l2 2 l2 -2 l2 2 l2 -2 l2 2 l2 -2 l2 2 l2 -2 l2 2 l2 -2 l2 2 l2 -2 l2 2 l2 -2 l2 2 M903.8 454.89 l2 2 l2 -2 l2 2 l2 -2 l2 2 l2 -2 l2 2 l2 -2 l2 2 l2 -2 l2 2 l2 -2 l2 2 l2 -2 l2 2 l2 -2 l2 2 l2 -2 l2 2 l2 -2 M405.0 480.06 l2 2 l2 -2 l2 2 l2 -2 l2 2 l2 -2 l2 2 l2 -2 l2 2 l2 -2 l2 2 l2 -2 l2 2 l2 -2 l2 2 l2 -2 l2 2 l2 -2 l2 2 l2 -2 l2 2 l2 -2 l2 2 l2 -2 l2 2 l2 -2 M465.0 480.06 l2 2 l2 -2 l2 2 l2 -2 l2 2 l2 -2 l2 2 l2 -2 l2 2 l2 -2 l2 2 l2 -2 l2 2 l2 -2 l2 2 l2 -2 M503.7 480.06 l2 2 l2 -2 l2 2 l2 -2 l2 2 l2 -2 M523.6 480.06 l2 2 l2 -2 l2 2 l2 -2 l2 2 l2 -2 l2 2 l2 -2 l2 2 l2 -2 l2 2 l2 -2 l2 2 l2 -2 l2 2 l2 -2 l2 2 l2 -2 l2 2 l2 -2 l2 2 l2 -2 l2 2 l2 -2 l2 2 l2 -2 l2 2 l2 -2 l2 2 l2 -2 l2 2 l2 -2 M596.1 480.06 l2 2 l2 -2 l2 2 l2 -2 l2 2 l2 -2 l2 2 l2 -2 l2 2 l2 -2 l2 2 l2 -2 l2 2 l2 -2 l2 2 l2 -2 l2 2 M638.5 480.06 l2 2 l2 -2 l2 2 l2 -2 l2 2 l2 -2 l2 2 l2 -2 l2 2 l2 -2 l2 2 l2 -2 l2 2 l2 -2 l2 2 l2 -2 l2 2 l2 -2 l2 2 l2 -2 l2 2 l2 -2 l2 2 l2 -2 l2 2 l2 -2 l2 2 l2 -2 l2 2 l2 -2 l2 2 l2 -2 M711.0 480.06 l2 2 l2 -2 l2 2 l2 -2 l2 2 l2 -2 l2 2 l2 -2 l2 2 l2 -2 l2 2 l2 -2 l2 2 l2 -2 l2 2 l2 -2 l2 2 l2 -2 l2 2 l2 -2 l2 2 l2 -2 M762.2 480.06 l2 2 l2 -2 l2 2 l2 -2 l2 2 l2 -2 l2 2 l2 -2 l2 2 l2 -2 l2 2 l2 -2 l2 2 l2 -2 l2 2 l2 -2 l2 2 l2 -2 l2 2 M807.9 480.06 l2 2 l2 -2 l2 2 l2 -2 l2 2 l2 -2 l2 2 l2 -2 l2 2 l2 -2 l2 2 l2 -2 l2 2 l2 -2 l2 2 l2 -2 l2 2 l2 -2 M851.2 480.06 l2 2 l2 -2 l2 2 l2 -2 l2 2 l2 -2 l2 2 l2 -2 l2 2 l2 -2 l2 2 l2 -2 l2 2 l2 -2 l2 2 l2 -2 l2 2 l2 -2 M894.5 480.06 l2 2 l2 -2 l2 2 l2 -2 l2 2 l2 -2 l2 2 l2 -2 l2 2 l2 -2 l2 2 l2 -2 M926.2 480.06 l2 2 l2 -2 l2 2 l2 -2 l2 2 l2 -2 l2 2 l2 -2 l2 2 M405.0 505.23 l2 2 l2 -2 l2 2 l2 -2 l2 2 l2 -2 l2 2 l2 -2 l2 2 l2 -2 l2 2 l2 -2 l2 2 l2 -2 l2 2 l2 -2 l2 2 l2 -2 l2 2 l2 -2 l2 2 l2 -2 l2 2 l2 -2 l2 2 M460.2 505.23 l2 2 l2 -2 l2 2 l2 -2 l2 2 M476.6 505.23 l2 2 l2 -2 l2 2 l2 -2 l2 2 l2 -2 l2 2 l2 -2 l2 2 l2 -2 l2 2 l2 -2 l2 2 l2 -2 l2 2 l2 -2 l2 2 l2 -2 l2 2 l2 -2 l2 2 l2 -2 l2 2 l2 -2 l2 2 l2 -2 l2 2 l2 -2 l2 2 l2 -2 l2 2 l2 -2 l2 2 l2 -2 M549.7 505.23 l2 2 l2 -2 l2 2 l2 -2 l2 2 l2 -2 l2 2 l2 -2 l2 2 l2 -2 l2 2 l2 -2 l2 2 l2 -2 M583.6 505.23 l2 2 l2 -2 l2 2 l2 -2 l2 2 l2 -2 l2 2 l2 -2 l2 2 l2 -2 l2 2 l2 -2 l2 2 l2 -2 l2 2 l2 -2 l2 2 l2 -2 l2 2 l2 -2 l2 2 l2 -2 l2 2 l2 -2 M637.1 505.23 l2 2 l2 -2 l2 2 l2 -2 l2 2 l2 -2 l2 2 l2 -2 l2 2 l2 -2 l2 2 l2 -2 l2 2 l2 -2 l2 2 l2 -2 l2 2 l2 -2 l2 2 M681.1 505.23 l2 2 l2 -2 l2 2 l2 -2 l2 2 l2 -2 l2 2 l2 -2 l2 2 M705.0 505.23 l2 2 l2 -2 l2 2 l2 -2 l2 2 l2 -2 l2 2 l2 -2 l2 2 l2 -2 l2 2 l2 -2 l2 2 l2 -2 M738.5 505.23 l2 2 l2 -2 l2 2 l2 -2 l2 2 l2 -2 l2 2 l2 -2 l2 2 l2 -2 l2 2 l2 -2 l2 2 l2 -2 l2 2 l2 -2 l2 2 l2 -2 l2 2 l2 -2 l2 2 l2 -2 l2 2 l2 -2 l2 2 M794.1 505.23 l2 2 l2 -2 l2 2 l2 -2 l2 2 l2 -2 l2 2 l2 -2 l2 2 l2 -2 l2 2 l2 -2 l2 2 l2 -2 l2 2 l2 -2 l2 2 M834.7 505.23 l2 2 l2 -2 l2 2 l2 -2 l2 2 l2 -2 l2 2 l2 -2 l2 2 l2 -2 l2 2 l2 -2 l2 2 l2 -2 l2 2 l2 -2 l2 2 l2 -2 l2 2 l2 -2 l2 2 l2 -2 l2 2 M886.2 505.23 l2 2 l2 -2 l2 2 l2 -2 l2 2 l2 -2 l2 2 M905.5 505.23 l2 2 l2 -2 l2 2 l2 -2 l2 2 l2 -2 l2 2 l2 -2 l2 2 l2 -2 l2 2 l2 -2 l2 2 l2 -2 l2 2 l2 -2 l2 2 l2 -2 l2 2 M456.2 530.40 l2 2 l2 -2 l2 2 l2 -2 l2 2 l2 -2 l2 2 l2 -2 l2 2 l2 -2 l2 2 l2 -2 l2 2 l2 -2 l2 2 l2 -2 l2 2 l2 -2 l2 2 l2 -2 l2 2 l2 -2 l2 2 l2 -2 l2 2 M511.6 530.40 l2 2 l2 -2 l2 2 l2 -2 l2 2 l2 -2 l2 2 l2 -2 l2 2 l2 -2 l2 2 l2 -2 l2 2 l2 -2 M545.1 530.40 l2 2 l2 -2 l2 2 l2 -2 l2 2 l2 -2 l2 2 l2 -2 l2 2 l2 -2 l2 2 l2 -2 l2 2 M576.0 530.40 l2 2 l2 -2 l2 2 l2 -2 l2 2 l2 -2 l2 2 l2 -2 l2 2 l2 -2 l2 2 l2 -2 l2 2 l2 -2 l2 2 l2 -2 l2 2 l2 -2 l2 2 l2 -2 l2 2 l2 -2 l2 2 M625.9 530.40 l2 2 l2 -2 l2 2 l2 -2 l2 2 l2 -2 l2 2 l2 -2 l2 2 l2 -2 l2 2 l2 -2 l2 2 l2 -2 l2 2 l2 -2 l2 2 l2 -2 l2 2 l2 -2 l2 2 l2 -2 l2 2 l2 -2 M678.8 530.40 l2 2 l2 -2 l2 2 l2 -2 l2 2 l2 -2 l2 2 l2 -2 l2 2 l2 -2 l2 2 l2 -2 l2 2 l2 -2 M712.2 530.40 l2 2 l2 -2 l2 2 l2 -2 l2 2 l2 -2 l2 2 l2 -2 l2 2 l2 -2 l2 2 M738.5 530.40 l2 2 l2 -2 l2 2 l2 -2 l2 2 l2 -2 l2 2 l2 -2 l2 2 l2 -2 l2 2 l2 -2 l2 2 l2 -2 l2 2 l2 -2 l2 2 l2 -2 l2 2 l2 -2 l2 2 l2 -2 l2 2 l2 -2 l2 2 l2 -2 l2 2 l2 -2 l2 2 l2 -2 l2 2 l2 -2 l2 2 M809.1 530.40 l2 2 l2 -2 l2 2 l2 -2 l2 2 l2 -2 l2 2 l2 -2 l2 2 l2 -2 l2 2 l2 -2 l2 2 l2 -2 l2 2"/></svg>
<!-- DOCUMENT -->
<div id="lines">
<div class="dt" id="L0" style="top:240.5px;transform:scaleX(1.0187);font-weight:bold">Ini <u>Contoh</u> Format Teks / Tulisan</div>
<div class="dt" id="L1" style="top:265.3px;transform:scaleX(1.0102)"><u>Lorem</u> <u>ipsum</u> <u>dolor</u> sit <u>amet,</u> <u>consectetur</u> <u>adipiscing</u> <u>elit.</u> Ut <u>vestibulum</u> <u>scelerisque</u> <u>sem.</u></div>
<div class="dt" id="L2" style="top:290.5px;transform:scaleX(1.0005)"><u>et</u> <u>maximus</u> <u>justo</u> <u>facilisis</u> <u>lobortis.</u> <u>Sed</u> <u>eu</u> <u>viverra</u> <u>metus,</u> <u>vel</u> <u>commodo</u> <u>odio.</u> <u>Maecenas</u></div>
<div class="dt" id="L3" style="top:315.6px;transform:scaleX(1.0259)"><u>luctus</u> <u>semper</u> <u>justo.</u> <u>Suspendisse</u> sit <u>amet</u> <u>tristique</u> <u>dolor.</u> <u>Vivamus</u> <u>auctor</u> <u>nunc</u> <u>ut</u> <u>turpis</u></div>
<div class="dt" id="L4" style="top:340.8px;transform:scaleX(1.0101)"><u>rhoncus</u> <u>fringilla.</u> <u>Suspendisse</u> <u>velit</u> ligula, <u>placerat</u> <u>eu</u> libero <u>nec,</u> <u>laoreet</u> <u>porttitor</u> <u>ex.</u></div>
<div class="dt" id="L5" style="top:366.0px;transform:scaleX(0.9990)"><u>Duis</u> <u>nisl</u> <u>arcu,</u> <u>mollis</u> in <u>elit</u> <u>eu,</u> <u>ultricies</u> <u>elementum</u> <u>nibh.</u></div>
<div class="dt j" id="L6" style="top:391.2px;width:539.5px;text-align:justify;text-align-last:justify"><u>Cras</u> <u>odio</u> <u>est,</u> <u>vestibulum</u> a <u>pharetra</u> <u>at,</u> <u>pharetra</u> <u>id</u> <u>leo.</u> <u>Vivamus</u> <u>tincidunt</u> tortor <u>quis</u></div>
<div class="dt j" id="L7" style="top:416.3px;width:539.5px;text-align:justify;text-align-last:justify"><u>dictum</u> <u>aliquet.</u> <u>Maecenas</u> <u>ac</u> <u>nibh</u> <u>ut</u> <u>orci</u> <u>aliquam</u> <u>maximus.</u> In <u>sed</u> <u>nisi</u> <u>at</u> urna tempus</div>
<div class="dt j" id="L8" style="top:441.5px;width:539.5px;text-align:justify;text-align-last:justify"><u>aliquam</u> <u>nec</u> a <u>lacus.</u> Integer <u>vehicula</u> <u>posuere</u> <u>sem</u> <u>gravida</u> <u>faucibus.</u> <u>Praesent</u> <u>aliquet</u></div>
<div class="dt j" id="L9" style="top:466.7px;width:539.5px;text-align:justify;text-align-last:justify"><u>tincidunt</u> <u>risus,</u> <u>ac</u> <u>fermentum</u> <u>neque</u> <u>fermentum</u> <u>rutrum.</u> <u>Donec</u> <u>mattis</u> <u>ipsum</u> <u>quis</u> <u>leo</u></div>
<div class="dt j" id="L10" style="top:491.8px;width:539.5px;text-align:justify;text-align-last:justify"><u>pretium,</u> <u>id</u> <u>consectetur</u> <u>justo</u> <u>gravida.</u> <u>Donec</u> <u>dui</u> <u>eros,</u> <u>euismod</u> <u>luctus</u> <u>posuere</u> <u>et,</u> <u>iaculis</u></div>
<div class="dt" id="L11" style="top:517.0px;transform:scaleX(1.0157)">a tortor. <u>Praesent</u> <u>vitae</u> <u>nibh</u> <u>dictum,</u> <u>eleifend</u> <u>nunc</u> <u>vel,</u> <u>fermentum</u> <u>nibh.</u></div>
</div>
<!-- STATUS -->
<div class="a" style="left:0;top:706px;width:1366px;height:1px;background:#d6d6d6"></div>
<div id="status" class="a"></div>
<svg class="a" style="left:155px;top:710px" width="17" height="14">
 <path d="M1.5 1.5c2 0 4 0.3 6 1.2v9.6c-2-0.9-4-1.2-6-1.2z" fill="none" stroke="#6b6b6b" stroke-width="1"/>
 <path d="M7.5 2.7c1.2-0.6 2.4-0.9 3.5-1.1M7.5 12.3c1.5-0.8 3-1.1 5-1.2v-3" fill="none" stroke="#6b6b6b" stroke-width="1"/>
 <path d="M7.5 12.3v1.5" stroke="#6b6b6b" stroke-width="1"/>
 <path d="M11.5 2.5l3.5 4M15 2.5l-3.5 4" stroke="#6b6b6b" stroke-width="1.1"/>
</svg>
<svg class="a" style="left:321px;top:710px" width="18" height="16">
 <path d="M5 4.2A6 6 0 0 0 3.5 12.5" fill="none" stroke="#505050" stroke-width="1.3" stroke-dasharray="2 1.3"/>
 <path d="M11.5 4.2a6 6 0 0 1 2.3 3.3" fill="none" stroke="#505050" stroke-width="1.3"/>
 <path d="M8.2 0.5v6.5M5.8 4.8l2.4 2.4 2.4-2.4" fill="none" stroke="#505050" stroke-width="1.3"/>
 <path d="M7.5 11l2.5 2.8 5.5-6" fill="none" stroke="#505050" stroke-width="1.7"/>
</svg>
<div class="a" style="left:1112px;top:707px;width:40px;height:21px;background:#d5d5d5"></div>
<svg class="a" style="left:1083px;top:709px" width="100" height="16">
 <g fill="none" stroke="#6b6b6b" stroke-width="1">
  <path d="M1.5 2.5h5l1 1 1-1h5v10h-5l-1 1-1-1h-5z"/><path d="M7.5 3.5v9"/>
  <path d="M3 5.5h3M3 7.5h3M3 9.5h3M9 5.5h3M9 7.5h3M9 9.5h3" stroke-width="0.8"/>
  <rect x="42.5" y="1.5" width="13" height="12"/>
  <path d="M44.5 4.5h9M44.5 6.5h9M44.5 8.5h9M44.5 10.5h9" stroke-width="0.9"/>
  <path d="M82.5 1.5h10v6M82.5 1.5v12h5" />
  <path d="M84.5 4.5h6M84.5 6.5h6M84.5 8.5h3" stroke-width="0.9"/>
  <circle cx="92.5" cy="11" r="3.3" fill="#f3f3f3"/>
 </g>
 <path d="M90.5 11h4M92.5 9v4" stroke="#6b6b6b" stroke-width="0.8"/>
</svg>
<svg class="a" style="left:1196px;top:710px" width="130" height="16">
 <path d="M2 7.5h8" stroke="#555" stroke-width="1"/>
 <path d="M15 7.5h100" stroke="#6b6b6b" stroke-width="1"/>
 <rect x="58" y="1.5" width="5" height="13" fill="#555"/>
 <path d="M65.5 4v7" stroke="#555" stroke-width="1"/>
 <path d="M120 7.5h8M124 3.5v8" stroke="#555" stroke-width="1"/>
</svg>
<!-- TASKBAR -->
<div id="task" class="a"></div>
<div class="a" style="left:0;top:767px;width:1366px;height:1px;background:#0a0f12"></div>
<svg class="a" style="left:15px;top:739px" width="19" height="18">
 <path d="M1 2.5l6.5-0.9v7H1zM8.5 1.4L17.5 0v8.6h-9zM1 9.6h6.5v7L1 15.7zM8.5 9.6h9V18l-9-1.3z" fill="#fff"/>
</svg>
<svg class="a" style="left:62px;top:737px" width="26" height="24">
 <path d="M2 3h8l2 2h11v4H2z" fill="#e9a93a"/>
 <rect x="2" y="6" width="22" height="15" fill="#f7cf5a"/>
 <path d="M8 21v-6h10v6h-3v-3h-4v3z" fill="#2e7fd6"/>
 <rect x="7" y="14" width="12" height="2" fill="#2e7fd6"/>
</svg>
<svg class="a" style="left:111px;top:736px" width="26" height="26">
 <circle cx="13" cy="13" r="12" fill="#db4437"/>
 <path d="M13 13L2.6 7A12 12 0 0 0 13 25z" fill="#0f9d58"/>
 <path d="M13 13h12A12 12 0 0 1 13 25z" fill="#ffcd40"/>
 <path d="M13 13L2.6 7A12 12 0 0 0 8 23.5z" fill="#0f9d58"/>
 <circle cx="13" cy="13" r="5.5" fill="#fff"/>
 <circle cx="13" cy="13" r="4.3" fill="#4285f4"/>
</svg>
<svg class="a" style="left:159px;top:736px" width="28" height="26">
 <rect x="6" y="2" width="20" height="22" fill="#185abd"/>
 <rect x="6" y="2" width="20" height="6" fill="#41a5ee"/>
 <rect x="6" y="8" width="20" height="7" fill="#2b7cd3"/>
 <rect x="1" y="7" width="14" height="13" fill="#124a9e"/>
 <text x="2.5" y="17.5" font-family="Liberation Sans" font-size="10.5" font-weight="bold" fill="#fff">W</text>
</svg>
<svg class="a" style="left:209px;top:737px" width="26" height="22">
 <rect x="0.5" y="0.5" width="24" height="20" fill="#000" stroke="#9a9a9a" stroke-width="1"/>
 <rect x="1" y="1" width="23" height="2.5" fill="#bcbcbc"/>
 <text x="3" y="11" font-family="Liberation Mono" font-size="5.5" fill="#ccc">C:\</text>
 <path d="M13 10.5h8" stroke="#ccc" stroke-width="1"/>
</svg>
<div class="a" style="left:55px;top:766px;width:40px;height:1px;background:#b4c4de"></div>
<div class="a" style="left:104px;top:766px;width:40px;height:1px;background:#b4c4de"></div>
<div class="a" style="left:153px;top:766px;width:40px;height:1px;background:#b4c4de"></div>
<div class="a" style="left:202px;top:766px;width:40px;height:1px;background:#b4c4de"></div>
<svg class="a" style="left:1082px;top:740px" width="120" height="20">
 <path d="M3 11l6-6 6 6" fill="none" stroke="#fff" stroke-width="1.3"/>
 <ellipse cx="30" cy="9" rx="6" ry="5" fill="#d8dde3"/>
 <circle cx="35" cy="11" r="5" fill="#3d8ee6"/>
 <path d="M35 9v5" stroke="#fff" stroke-width="1.3"/><circle cx="35" cy="7.5" r="0.8" fill="#fff"/>
 <g fill="none" stroke="#fff" stroke-width="1.1">
  <rect x="55.5" y="4.5" width="10" height="8" fill="#fff"/><path d="M66.5 7v3"/><path d="M49 9h3.5"/><path d="M51.5 5.5h2.5v6h-2.5z" fill="#fff"/><path d="M50 6.5h2M50 10.5h2"/>
  <rect x="74.5" y="3.5" width="14" height="9"/><path d="M81.5 12.5v3M77 15.5h9"/><rect x="72.5" y="1.5" width="4" height="4" fill="#1c2a3a"/>
  <path d="M96 7h3l4-4v13l-4-4h-3z"/><path d="M106 6a4 4 0 0 1 0 6M109 4a7 7 0 0 1 0 10" stroke="#c8c8c8"/>
 </g>
</svg>
<svg class="a" style="left:1324px;top:740px" width="18" height="18">
 <path d="M1.5 1.5h15v11h-15z" fill="#fff"/>
 <path d="M4 4.5h10M4 7h10M4 9.5h7" stroke="#1f3540" stroke-width="1"/>
 <circle cx="14" cy="14" r="3" fill="#1f3540" stroke="#fff" stroke-width="1"/>
</svg>
<div class="a" style="left:1361px;top:728px;width:1px;height:39px;background:#5a6470"></div>
<!-- window borders -->
<div class="a" style="left:0;top:0;width:1366px;height:1px;background:#101820"></div>
<div class="a" style="left:0;top:0;width:1px;height:728px;background:#101820"></div>
<div class="a" style="left:1365px;top:0;width:1px;height:728px;background:#101820"></div>
<!-- LABELS -->
<div class="a lb" style="left:628.43px;top:10.90px;font-size:12.5px;color:#b9cbe6;transform:scaleX(0.9745);transform-origin:0 0;">Document1&nbsp; -&nbsp; Word</div>
<div class="a lb" style="left:1063.29px;top:11.00px;font-size:12.5px;color:#b9cbe6;transform:scaleX(0.9100);transform-origin:0 0;">Rendy Rizaldy</div>
<div class="a lb" style="left:19.60px;top:41.30px;font-size:13px;color:#fff;transform:scaleX(0.9000);transform-origin:0 0;">File</div>
<div class="a lb" style="left:72.62px;top:41.70px;font-size:13px;color:#2b579a;transform:scaleX(0.9788);transform-origin:0 0;">Home</div>
<div class="a lb" style="left:132.40px;top:41.70px;font-size:13px;color:#fff;transform:scaleX(0.8969);transform-origin:0 0;">Insert</div>
<div class="a lb" style="left:188.82px;top:41.70px;font-size:13px;color:#fff;transform:scaleX(0.8833);transform-origin:0 0;">Draw</div>
<div class="a lb" style="left:242.70px;top:41.70px;font-size:13px;color:#fff;transform:scaleX(0.9000);transform-origin:0 0;">Design</div>
<div class="a lb" style="left:305.97px;top:41.70px;font-size:13px;color:#fff;transform:scaleX(0.9316);transform-origin:0 0;">Layout</div>
<div class="a lb" style="left:368.32px;top:41.70px;font-size:13px;color:#fff;transform:scaleX(0.8754);transform-origin:0 0;">References</div>
<div class="a lb" style="left:452.33px;top:41.70px;font-size:13px;color:#fff;transform:scaleX(0.9717);transform-origin:0 0;">Mailings</div>
<div class="a lb" style="left:524.63px;top:41.70px;font-size:13px;color:#fff;transform:scaleX(0.8714);transform-origin:0 0;">Review</div>
<div class="a lb" style="left:588.80px;top:41.70px;font-size:13px;color:#fff;transform:scaleX(0.8964);transform-origin:0 0;">View</div>
<div class="a lb" style="left:640.32px;top:41.70px;font-size:13px;color:#fff;transform:scaleX(0.9760);transform-origin:0 0;">Help</div>
<div class="a lb" style="left:721.60px;top:41.10px;font-size:13px;color:#fff;transform:scaleX(0.9331);transform-origin:0 0;">Tell me what you want to do</div>
<div class="a lb" style="left:14.83px;top:105.70px;font-size:11.6px;color:#262626;transform:scaleX(0.9750);transform-origin:0 0;">Paste</div>
<div class="a lb" style="left:71.53px;top:71.70px;font-size:11.6px;color:#a6a6a6;transform:scaleX(1.0706);transform-origin:0 0;">Cut</div>
<div class="a lb" style="left:71.56px;top:94.90px;font-size:11.6px;color:#a6a6a6;transform:scaleX(1.0385);transform-origin:0 0;">Copy</div>
<div class="a lb" style="left:71.57px;top:118.00px;font-size:11.6px;color:#262626;transform:scaleX(1.0320);transform-origin:0 0;">Format Painter</div>
<div class="a lb" style="left:48.56px;top:141.00px;font-size:11.6px;color:#262626;transform:scaleX(1.0417);transform-origin:0 0;">Clipboard</div>
<div class="a lb" style="left:292.14px;top:141.00px;font-size:11.6px;color:#262626;transform:scaleX(1.0636);transform-origin:0 0;">Font</div>
<div class="a lb" style="left:549.51px;top:141.00px;font-size:11.6px;color:#262626;transform:scaleX(0.9868);transform-origin:0 0;">Paragraph</div>
<div class="a lb" style="left:919.57px;top:141.00px;font-size:11.6px;color:#262626;transform:scaleX(0.9300);transform-origin:0 0;">Styles</div>
<div class="a lb" style="left:1202.54px;top:141.00px;font-size:11.6px;color:#262626;transform:scaleX(1.0559);transform-origin:0 0;">Editing</div>
<div class="a lb" style="left:1276.30px;top:141.00px;font-size:11.6px;color:#262626;transform:scaleX(1.0077);transform-origin:0 0;">Add-ins</div>
<div class="a lb" style="left:175.55px;top:80.30px;font-size:12.5px;color:#262626;transform:scaleX(0.9543);transform-origin:0 0;">Cambria</div>
<div class="a lb" style="left:288.72px;top:80.30px;font-size:12.5px;color:#262626;transform:scaleX(0.8769);transform-origin:0 0;">12</div>
<div class="a lb" style="left:730.80px;top:109.80px;font-size:12px;color:#444;transform:scaleX(0.9979);transform-origin:0 0;">&para; Normal</div>
<div class="a lb" style="left:796.30px;top:109.80px;font-size:12px;color:#444;transform:scaleX(0.9462);transform-origin:0 0;">&para; No Spac...</div>
<div class="a lb" style="left:871.72px;top:109.80px;font-size:12px;color:#444;transform:scaleX(0.9811);transform-origin:0 0;">Heading 1</div>
<div class="a lb" style="left:943.49px;top:109.80px;font-size:12px;color:#444;transform:scaleX(1.0075);transform-origin:0 0;">Heading 2</div>
<div class="a lb" style="left:1032.30px;top:109.80px;font-size:12px;color:#444;transform:scaleX(0.9864);transform-origin:0 0;">Title</div>
<div class="a lb" style="left:1093.97px;top:109.80px;font-size:12px;color:#444;transform:scaleX(1.0256);transform-origin:0 0;">Subtitle</div>
<div class="a" style="left:0;top:0;width:784.5px;height:160px;overflow:hidden"><div class="a lb" style="left:725.50px;top:85.10px;font-size:12.8px;color:#000;transform:scaleX(1.0000);transform-origin:0 0;">AaBbCcDc</div></div>
<div class="a" style="left:0;top:0;width:856.0px;height:160px;overflow:hidden"><div class="a lb" style="left:798.00px;top:85.10px;font-size:12.8px;color:#000;transform:scaleX(0.9839);transform-origin:0 0;">AaBbCcDc</div></div>
<div class="a" style="left:0;top:0;width:928.0px;height:160px;overflow:hidden"><div class="a lb" style="left:869.80px;top:82.90px;font-size:17.6px;color:#3a62a6;transform:scaleX(0.9953);transform-origin:0 0;">AaBbCc</div></div>
<div class="a" style="left:0;top:0;width:1000.3px;height:160px;overflow:hidden"><div class="a lb" style="left:941.90px;top:84.70px;font-size:13.8px;color:#3a62a6;transform:scaleX(1.0350);transform-origin:0 0;">AaBbCcD</div></div>
<div class="a lb" style="left:1014.00px;top:73.80px;font-size:28px;color:#222;transform:scaleX(1.0577);transform-origin:0 0;font-weight:normal">AaB</div>
<div class="a" style="left:0;top:0;width:1145.0px;height:160px;overflow:hidden"><div class="a lb" style="left:1085.50px;top:85.40px;font-size:13px;color:#5a5a5a;transform:scaleX(1.0965);transform-origin:0 0;">AaBbCcD</div></div>
<div class="a lb" style="left:1207.78px;top:72.00px;font-size:11.6px;color:#262626;transform:scaleX(1.0238);transform-origin:0 0;">Find</div>
<div class="a lb" style="left:1207.81px;top:94.50px;font-size:11.6px;color:#262626;transform:scaleX(0.9854);transform-origin:0 0;">Replace</div>
<div class="a lb" style="left:1207.84px;top:117.60px;font-size:11.6px;color:#262626;transform:scaleX(0.9645);transform-origin:0 0;">Select</div>
<div class="a lb" style="left:1275.30px;top:105.70px;font-size:11.6px;color:#262626;transform:scaleX(1.0615);transform-origin:0 0;">Add-ins</div>
<div class="a lb" style="left:6.93px;top:712.00px;font-size:11.2px;color:#333;transform:scaleX(0.9750);transform-origin:0 0;">Page 1 of 1</div>
<div class="a lb" style="left:84.18px;top:711.00px;font-size:11.2px;color:#333;transform:scaleX(1.0200);transform-origin:0 0;">143 words</div>
<div class="a lb" style="left:187.38px;top:711.00px;font-size:11.2px;color:#333;transform:scaleX(1.0195);transform-origin:0 0;">English (United States)</div>
<div class="a lb" style="left:340.50px;top:711.50px;font-size:11.2px;color:#333;transform:scaleX(1.0320);transform-origin:0 0;">Accessibility: Good to go</div>
<div class="a lb" style="left:1337.20px;top:711.30px;font-size:11.2px;color:#333;transform:scaleX(0.9364);transform-origin:0 0;">90%</div>
<div class="a lb" style="left:946.51px;top:735.90px;font-size:11.3px;color:#fff;transform:scaleX(1.0853);transform-origin:0 0;">Upload</div>
<div class="a lb" style="left:946.52px;top:748.90px;font-size:11.3px;color:#fff;transform:scaleX(1.0816);transform-origin:0 0;">Download</div>
<div class="a lb" style="left:1019.00px;top:735.90px;font-size:11.3px;color:#fff;transform:scaleX(1.0309);transform-origin:0 0;">0.00 Mbit/s</div>
<div class="a lb" style="left:1019.00px;top:748.90px;font-size:11.3px;color:#fff;transform:scaleX(1.0309);transform-origin:0 0;">0.00 Mbit/s</div>
<div class="a lb" style="left:1241.76px;top:731.90px;font-size:12px;color:#fff;transform:scaleX(0.9429);transform-origin:0 0;">11:25</div>
<div class="a lb" style="left:1205.00px;top:749.60px;font-size:12px;color:#fff;transform:scaleX(0.9680);transform-origin:0 0;">02-December-2023</div>
<div class="a" style="left:1010px;top:71px;width:62px;height:7px;background:#fff"></div>
</body></html>
